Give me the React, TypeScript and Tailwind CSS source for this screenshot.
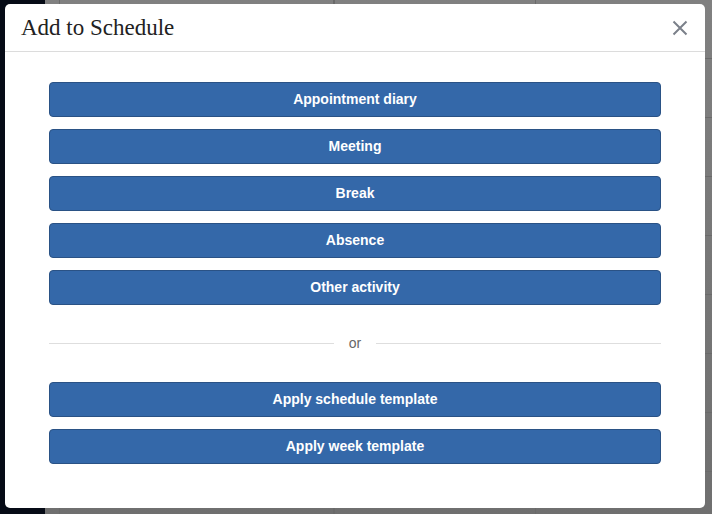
import React from 'react';

const actions = ['Appointment diary', 'Meeting', 'Break', 'Absence', 'Other activity'];
const templates = ['Apply schedule template', 'Apply week template'];

const ActionButton: React.FC<{ label: string }> = ({ label }) => (
  <button
    type="button"
    className="h-[35px] w-full rounded-[4px] border border-[#2a5285] bg-[#3468a9] text-[14px] font-bold text-white"
  >
    {label}
  </button>
);

const Backdrop: React.FC = () => {
  const rows = [57, 116, 175, 234, 293, 352, 411, 470];
  return (
    <div className="flex h-full w-full">
      <div className="w-[45px] shrink-0 bg-[#060b16]" />
      <div className="flex flex-1 bg-gradient-to-b from-[#808080] to-[#6f6f6f]">
        <div className="w-[15px] border-r border-[#6a6a6a]" />
        <div className="w-[275px] border-r-2 border-double border-[#6a6a6a]" />
        <div className="w-[201px] border-r border-[#6a6a6a]" />
        <div className="flex flex-1 flex-col">
          {rows.map((r) => (
            <div key={r} className="h-[59px] border-b border-[#6a6a6a]" />
          ))}
        </div>
      </div>
    </div>
  );
};

const App: React.FC = () => {
  return (
    <div
      className="relative h-[514px] w-[712px] overflow-hidden"
      style={{ fontFamily: '"Liberation Sans", Arial, sans-serif' }}
    >
      <Backdrop />
      <div className="absolute left-[5px] top-[4px] flex h-[504px] w-[700px] flex-col rounded-[5px] bg-white">
        <div className="flex h-[48px] items-center justify-between border-b border-[#dcdcdc] pl-4 pr-[17px]">
          <h2
            className="text-[23px] leading-none text-[#222]"
            style={{ fontFamily: '"Liberation Serif", "Times New Roman", serif' }}
          >
            Add to Schedule
          </h2>
          <svg width="16" height="16" viewBox="0 0 16 16" className="text-[#7b808a]">
            <path d="M1.5 1.5 L14.5 14.5 M14.5 1.5 L1.5 14.5" stroke="currentColor" strokeWidth="2" />
          </svg>
        </div>
        <div className="flex flex-col px-[44px] pt-[30px]">
          <div className="flex flex-col gap-[12px]">
            {actions.map((a) => (
              <ActionButton key={a} label={a} />
            ))}
          </div>
          <div className="flex h-[77px] items-center">
            <div className="h-px flex-1 bg-[#dedede]" />
            <span className="px-[15px] text-[14px] text-[#666]">or</span>
            <div className="h-px flex-1 bg-[#dedede]" />
          </div>
          <div className="flex flex-col gap-[12px]">
            {templates.map((t) => (
              <ActionButton key={t} label={t} />
            ))}
          </div>
        </div>
      </div>
    </div>
  );
};

export default App;
